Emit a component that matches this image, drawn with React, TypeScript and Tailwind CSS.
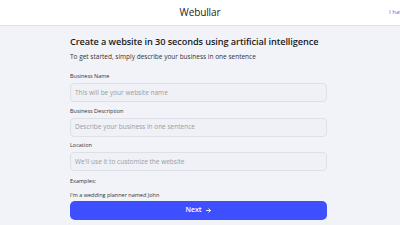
import React from "react";

const label = "text-[5.5px] leading-[8px] font-medium text-[#333]";
const input = "mt-[3px] h-[19px] rounded-[4px] border border-[#dde0e6] bg-[#eff1f6] flex items-center px-[4px] text-[6.5px] text-[#9a9ca3]";

export default function App() {
  return (
    <div className="w-[400px] h-[225px] overflow-hidden bg-[#f1f3f8] text-[#1c1c1c]" style={{ fontFamily: '"Open Sans", "Liberation Sans", sans-serif' }}>
      <header className="relative h-[26px] bg-white border-b border-[#dfe1e6] flex items-center justify-center">
        <span className="text-[10px] font-medium tracking-[-0.1px]">Webullar</span>
        <span className="absolute left-[389px] top-[8px] text-[6px] text-[#5b5ff5] whitespace-nowrap">I have a website</span>
      </header>
      <main className="w-[257px] ml-[70px] pt-[9px] flex flex-col">
        <h1 className="text-[9.2px] font-semibold leading-[14px] tracking-[-0.1px] whitespace-nowrap">Create a website in 30 seconds using artificial intelligence</h1>
        <p className="mt-[3px] text-[6.5px] leading-[10px] text-[#333] whitespace-nowrap">To get started, simply describe your business in one sentence</p>
        <label className={`mt-[10px] ${label}`}>Business Name</label>
        <div className={input}>This will be your website name</div>
        <label className={`mt-[4.5px] ${label}`}>Business Description</label>
        <div className={input}>Describe your business in one sentence</div>
        <label className={`mt-[4.5px] ${label}`}>Location</label>
        <div className={input}>We'll use it to customize the website</div>
        <p className={`mt-[6px] ${label} font-normal`}>Examples:</p>
        <p className={`mt-[6px] ${label} font-normal`}>I'm a wedding planner named John</p>
        <button className="mt-[2px] h-[19px] rounded-[5px] bg-[#3d4fff] text-white text-[7px] font-semibold flex items-center justify-center gap-[3px]">
          Next
          <svg width="7" height="7" viewBox="0 0 24 24" fill="none" stroke="currentColor" strokeWidth="3" strokeLinecap="round" strokeLinejoin="round"><path d="M5 12h14M13 6l6 6-6 6" /></svg>
        </button>
      </main>
    </div>
  );
}
